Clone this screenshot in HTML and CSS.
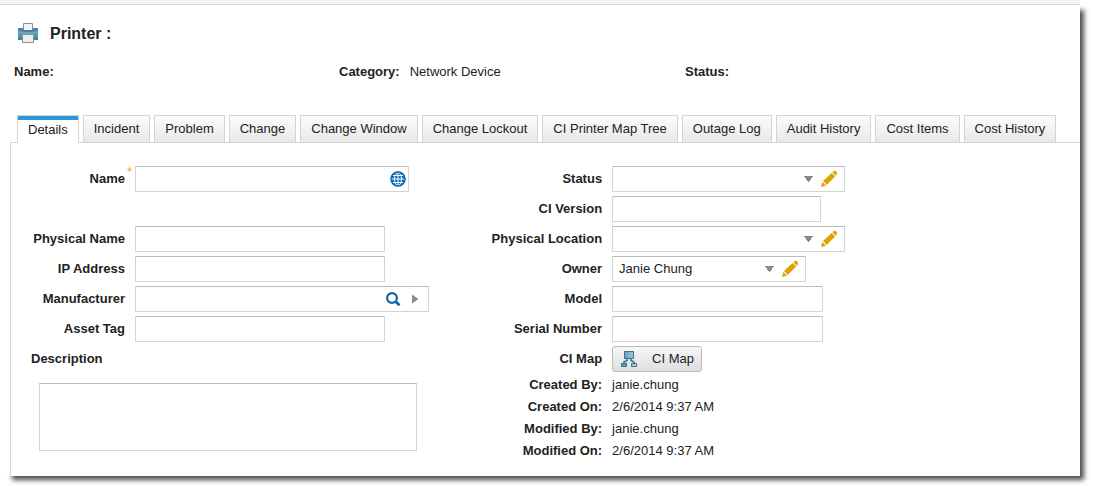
FILE: index.html
```html
<!DOCTYPE html>
<html lang="en">
<head>
<meta charset="utf-8">
<title>Printer</title>
<link rel="stylesheet" href="styles.css">
</head>
<body>
<svg class="defs" aria-hidden="true">
  <symbol id="pencil" viewBox="0 0 18 18">
    <path fill="#dba400" d="M1 17l1.300-5 3.700 3.700zM3 10.900L11.600 2.900l3.600 3.600L6.700 15.100zM12.400 2.200l1.300-1.200q1.200-.6 2.500.6t.7 2.700l-1.200 1.400z"/>
    <path fill="none" stroke="#fff" stroke-width=".8" stroke-dasharray="1 1" d="M2.600 11.500l3.800 3.800"/>
  </symbol>
</svg>
<main class="window">
  <header class="title">
    <svg width="22" height="22" viewBox="0 0 22 22" aria-hidden="true">
      <defs><linearGradient id="blue" x2="0" y2="1"><stop offset="0" stop-color="#4b7fa8"/><stop offset=".25" stop-color="#4b7fa8"/><stop offset=".3" stop-color="#62a9bd"/><stop offset="1" stop-color="#3f7ea8"/></linearGradient>
      <linearGradient id="screen"><stop offset="0" stop-color="#4b93ad"/><stop offset="1" stop-color="#b4d6e3"/></linearGradient></defs>
      <path fill="url(#blue)" d="M1 5h20v12H1z"/>
      <path fill="#f4f4f4" stroke="#8c8c8c" d="M6.500 .5h9v7h-9z"/>
      <path fill="#4b7fa8" d="M5 7h12v2H5z"/>
      <path fill="#62a9bd" d="M5 9h12v3H5z"/>
      <path fill="#eee" stroke="#8c8c8c" d="M5.500 11.500h11v8h-11z"/>
    </svg>
    <h1>Printer :</h1>
  </header>
  <dl class="summary">
    <div><dt>Name:</dt><dd></dd></div>
    <div><dt>Category:</dt><dd>Network Device</dd></div>
    <div><dt>Status:</dt><dd></dd></div>
  </dl>
  <nav class="tabs" role="tablist">
    <button class="tab active" role="tab" aria-selected="true">Details</button>
    <button class="tab" role="tab">Incident</button>
    <button class="tab" role="tab">Problem</button>
    <button class="tab" role="tab">Change</button>
    <button class="tab" role="tab">Change Window</button>
    <button class="tab" role="tab">Change Lockout</button>
    <button class="tab" role="tab">CI Printer Map Tree</button>
    <button class="tab" role="tab">Outage Log</button>
    <button class="tab" role="tab">Audit History</button>
    <button class="tab" role="tab">Cost Items</button>
    <button class="tab" role="tab">Cost History</button>
  </nav>
  <form class="details">
    <div class="column left">
      <div class="row spaced"><label class="required" for="name">Name</label>
        <div class="field w-name"><input id="name" type="text"><button type="button" class="icon" aria-label="Translate">
          <svg width="16" height="16" viewBox="0 0 16 16"><circle cx="8" cy="8" r="7.500" fill="#0f6ab5"/><g fill="none" stroke="#fff"><ellipse cx="8" cy="8" rx="3.500" ry="6.500"/><path d="M8 1v14M1 8h14M2.500 4.500h11M2.500 11.500h11"/></g><circle cx="8" cy="8" r="7" fill="none" stroke="#0f6ab5" stroke-width="1.400"/></svg></button></div></div>
      <div class="row"><label for="physical">Physical Name</label><div class="field w-text"><input id="physical" type="text"></div></div>
      <div class="row"><label for="ip">IP Address</label><div class="field w-text"><input id="ip" type="text"></div></div>
      <div class="row"><label for="maker">Manufacturer</label>
        <div class="field w-lookup"><input id="maker" type="text"><button type="button" class="icon" aria-label="Search">
          <svg width="16" height="16" viewBox="0 0 16 16" fill="none" stroke="#0f62ac"><circle cx="7" cy="7" r="4.900" stroke-width="2.200"/><path stroke-width="2.800" d="M10.800 10.800l3.700 3.400"/></svg></button><button type="button" class="icon" aria-label="Open">
          <svg width="16" height="16" viewBox="0 0 16 16"><path fill="#8a8a8a" d="M5 3.500L11.500 8 5 12.500z"/></svg></button></div></div>
      <div class="row"><label for="asset">Asset Tag</label><div class="field w-text"><input id="asset" type="text"></div></div>
      <div class="description"><label for="description">Description</label><textarea id="description"></textarea></div>
    </div>
    <div class="column right">
      <div class="row"><label for="status">Status</label>
        <div class="field w-select"><select id="status"><option></option></select><button type="button" class="icon" aria-label="Edit status"><svg width="18" height="18"><use href="#pencil"/></svg></button></div></div>
      <div class="row"><label for="version">CI Version</label><div class="field w-version"><input id="version" type="text"></div></div>
      <div class="row"><label for="location">Physical Location</label>
        <div class="field w-select"><select id="location"><option></option></select><button type="button" class="icon" aria-label="Edit location"><svg width="18" height="18"><use href="#pencil"/></svg></button></div></div>
      <div class="row"><label for="owner">Owner</label>
        <div class="field w-owner"><select id="owner"><option>Janie Chung</option></select><button type="button" class="icon" aria-label="Edit owner"><svg width="18" height="18"><use href="#pencil"/></svg></button></div></div>
      <div class="row"><label for="model">Model</label><div class="field w-short"><input id="model" type="text"></div></div>
      <div class="row"><label for="serial">Serial Number</label><div class="field w-short"><input id="serial" type="text"></div></div>
      <div class="row"><label for="map">CI Map</label>
        <button id="map" type="button" class="map">
          <svg width="16" height="17" viewBox="0 0 16 17" aria-hidden="true"><g fill="url(#screen)" stroke="#397389"><path d="M3.500 .5h9v7h-9zM.5 12.500h5v3h-5zM10.500 12.500h5v3h-5z"/></g><path fill="none" stroke="#397389" stroke-width="1.500" d="M6 8v1.500L3 11v1.500M10 8v1.500L13 11v1.500"/></svg>
          CI Map</button></div>
      <dl class="audit">
        <dt>Created By:</dt><dd>janie.chung</dd>
        <dt>Created On:</dt><dd>2/6/2014 9:37 AM</dd>
        <dt>Modified By:</dt><dd>janie.chung</dd>
        <dt>Modified On:</dt><dd>2/6/2014 9:37 AM</dd>
      </dl>
    </div>
  </form>
</main>
</body>
</html>
```
FILE: styles.css
```css
* { box-sizing: border-box; }
body {
  margin: 0;
  padding: 0 15px 15px 0;
  background: #fff;
  color: #222;
  font: 13px/16px "Liberation Sans", Arial, sans-serif;
}
button, input, select, textarea { font: inherit; color: inherit; }
h1, dl, dd { margin: 0; }
dt, label { font-weight: bold; }
.defs { position: absolute; width: 0; height: 0; }

.window { position: relative; border-top: 4px solid #f2f2f2; background: #fff; }
.window::before {
  content: "";
  position: absolute;
  z-index: -1;
  inset: 4px 0 0 10px;
  box-shadow: 3px 3px 5px 1px rgba(0, 0, 0, .7);
}

.title {
  display: flex;
  align-items: center;
  gap: 11px;
  padding: 17px 17px 0;
  border-top: 1px solid #d5d5d5;
}
.title svg { display: block; }
h1 { font-size: 16px; line-height: 24px; }

.summary {
  display: grid;
  grid-template-columns: 325fr 346fr 395fr;
  padding: 18px 0 35px 14px;
}
.summary div { display: flex; gap: 10px; }

.tabs {
  display: flex;
  gap: 4px;
  margin-left: 10px;
  padding-left: 7px;
}
.tab {
  height: 27px;
  padding: 0 10px;
  border: 1px solid #d5d5d5;
  border-bottom: 0;
  background: linear-gradient(#fcfcfc, #e8e8e8);
  white-space: nowrap;
}
.tab.active {
  position: relative;
  height: 28px;
  margin-bottom: -1px;
  background: linear-gradient(#2899da 4px, #fff 4px);
}

.details {
  display: grid;
  grid-template-columns: 4fr 5fr;
  margin-left: 10px;
  padding: 23px 0 14px;
  border: solid #d5d5d5;
  border-width: 1px 0 0 1px;
}
.row { display: grid; gap: 10px; align-items: center; margin-bottom: 4px; }
.row > label { text-align: right; line-height: 26px; }
.left .row { grid-template-columns: 114px 1fr; }
.right .row { grid-template-columns: 116px 1fr; }
.left .spaced { margin-bottom: 34px; }
.required { position: relative; }
.required::after {
  content: "*";
  position: absolute;
  right: -7px;
  top: -7px;
  color: #f09a10;
  font-size: 12px;
  font-weight: normal;
}

.field {
  display: flex;
  align-items: center;
  height: 26px;
  max-width: 100%;
  border: 1px solid #d5d5d5;
  border-top-color: #bbb;
  background: #fff;
}
.w-name { width: 274px; padding-right: 2px; }
.w-text { width: 250px; }
.w-lookup { width: 294px; padding-right: 5px; }
.w-select { width: 233px; padding-right: 6px; }
.w-owner { width: 194px; padding-right: 6px; }
.w-version { width: 209px; }
.w-short { width: 211px; }
.field input, .field select {
  flex: 1;
  min-width: 0;
  height: 24px;
  padding: 0 6px;
  border: 0;
  background: transparent;
}
.field select {
  appearance: none;
  background: linear-gradient(to bottom right, transparent 50%, transparent 50%);
  background: conic-gradient(from -40deg at 50% 100%, #888 80deg, transparent 0) right 7px center / 9px 6px no-repeat;
}
.icon { display: flex; padding: 0; border: 0; background: none; }
.w-lookup .icon { margin-left: 6px; }

.description { padding-left: 20px; }
.description label { display: block; line-height: 26px; }
textarea {
  display: block;
  width: 378px;
  max-width: 100%;
  height: 68px;
  margin: 11px 0 0 8px;
  border: 1px solid #d5d5d5;
  border-top-color: #bbb;
  resize: none;
}

.map {
  display: flex;
  align-items: center;
  gap: 15px;
  justify-self: start;
  height: 26px;
  padding: 0 7px 0 8px;
  border: 1px solid #bbb;
  border-radius: 3px;
  background: linear-gradient(#f7f7f7, #dedede);
}
.audit {
  display: grid;
  grid-template-columns: 116px 1fr;
  column-gap: 10px;
  line-height: 22px;
  margin-top: -2px;
}
.audit dt { text-align: right; }
```
